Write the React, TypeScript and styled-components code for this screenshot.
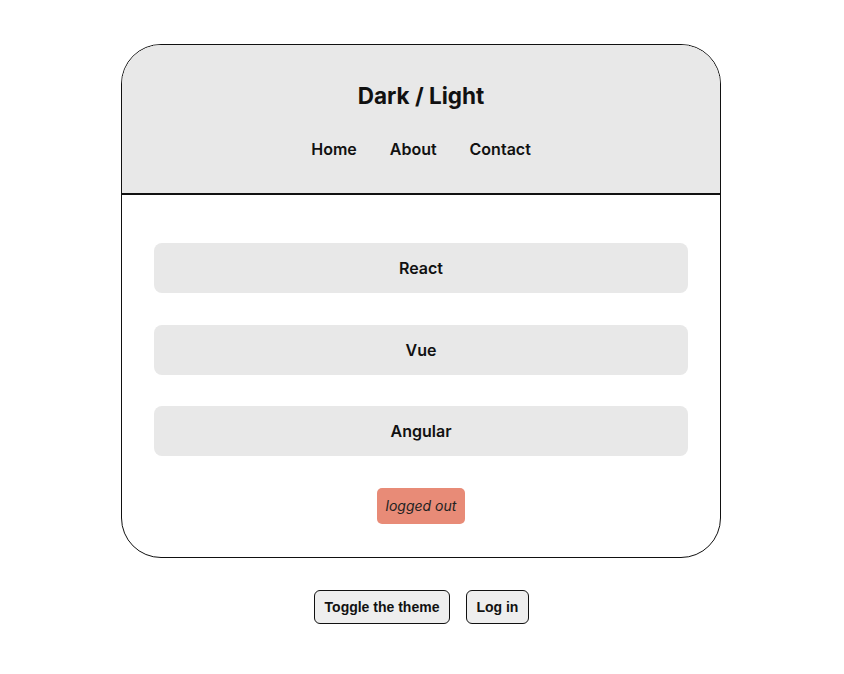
import styled, { createGlobalStyle } from 'styled-components';

const GlobalStyle = createGlobalStyle`
  body {
    margin: 0;
    background: #ffffff;
    font-family: Inter, "Noto Sans", sans-serif;
    color: #111111;
  }
`;

const Page = styled.div`
  display: flex;
  flex-direction: column;
  align-items: center;
  padding-top: 44px;
`;

const Card = styled.div`
  width: 600px;
  box-sizing: border-box;
  border: 1px solid #111;
  border-radius: 40px;
  overflow: hidden;
  margin-left: -2px;
`;

const Header = styled.header`
  background: #e8e8e8;
  border-bottom: 2px solid #111;
  padding: 36px 0 34px;
  display: flex;
  flex-direction: column;
  align-items: center;
  gap: 28px;
`;

const Title = styled.h1`
  margin: 0;
  font-size: 22.5px;
  line-height: 30px;
  font-weight: 700;
`;

const Nav = styled.nav`
  display: flex;
  gap: 33px;
`;

const NavLink = styled.a`
  font-size: 16px;
  line-height: 20px;
  font-weight: 600;
  color: #111;
  text-decoration: none;
`;

const Content = styled.main`
  padding: 48px 32px 33px;
  display: flex;
  flex-direction: column;
  align-items: center;
  gap: 31.6px;
`;

const Item = styled.div`
  align-self: stretch;
  height: 50px;
  border-radius: 8px;
  background: #e8e8e8;
  display: flex;
  align-items: center;
  justify-content: center;
  font-size: 16px;
  font-weight: 600;
`;

const Status = styled.span<{ $on: boolean }>`
  display: inline-flex;
  align-items: center;
  height: 36px;
  padding: 0 9px;
  border-radius: 5px;
  background: ${({ $on }) => ($on ? '#8fd19e' : '#e88b77')};
  font-size: 14px;
  font-style: italic;
  color: #222;
`;

const Controls = styled.div`
  display: flex;
  gap: 16px;
  margin-top: 32px;
  margin-left: -1px;
`;

const Button = styled.button`
  height: 34px;
  padding: 0 9.5px;
  border: 1px solid #111;
  border-radius: 6px;
  background: #eeeeee;
  font-family: "Liberation Sans", Arial, sans-serif;
  font-size: 14px;
  font-weight: 700;
  color: #111;
`;

const frameworks = ['React', 'Vue', 'Angular'];

export default function App() {
  return (
    <>
      <GlobalStyle />
      <Page>
        <Card>
          <Header>
            <Title>Dark / Light</Title>
            <Nav>
              <NavLink>Home</NavLink>
              <NavLink>About</NavLink>
              <NavLink>Contact</NavLink>
            </Nav>
          </Header>
          <Content>
            {frameworks.map((f) => (
              <Item key={f}>{f}</Item>
            ))}
            <Status $on={false}>logged out</Status>
          </Content>
        </Card>
        <Controls>
          <Button>Toggle the theme</Button>
          <Button>Log in</Button>
        </Controls>
      </Page>
    </>
  );
}
